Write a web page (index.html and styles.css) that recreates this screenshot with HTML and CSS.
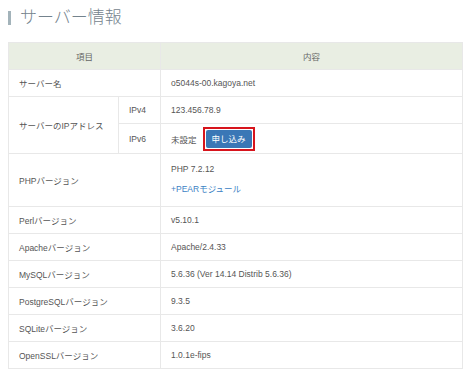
FILE: index.html
```html
<!DOCTYPE html>
<html lang="ja">
<head>
    <meta charset="UTF-8">
    <meta name="viewport" content="width=device-width, initial-scale=1.0">
    <title>サーバー情報</title>
    <link rel="stylesheet" href="styles.css">
</head>
<body>
    <h2 class="title">サーバー情報</h2>
    <table class="info">
        <colgroup>
            <col class="col-name">
            <col class="col-sub">
            <col class="col-value">
        </colgroup>
        <thead>
            <tr>
                <th colspan="2">項目</th>
                <th>内容</th>
            </tr>
        </thead>
        <tbody>
            <tr>
                <td colspan="2">サーバー名</td>
                <td>o5044s-00.kagoya.net</td>
            </tr>
            <tr class="ipv4">
                <td rowspan="2">サーバーのIPアドレス</td>
                <td>IPv4</td>
                <td>123.456.78.9</td>
            </tr>
            <tr class="ipv6">
                <td>IPv6</td>
                <td>
                    <div class="apply">
                        <span>未設定</span>
                        <span class="btn-frame"><a class="btn" href="#">申し込み</a></span>
                    </div>
                </td>
            </tr>
            <tr class="php">
                <td colspan="2">PHPバージョン</td>
                <td>
                    <p>PHP 7.2.12</p>
                    <p><a class="link" href="#">+PEARモジュール</a></p>
                </td>
            </tr>
            <tr>
                <td colspan="2">Perlバージョン</td>
                <td>v5.10.1</td>
            </tr>
            <tr>
                <td colspan="2">Apacheバージョン</td>
                <td>Apache/2.4.33</td>
            </tr>
            <tr>
                <td colspan="2">MySQLバージョン</td>
                <td>5.6.36 (Ver 14.14 Distrib 5.6.36)</td>
            </tr>
            <tr>
                <td colspan="2">PostgreSQLバージョン</td>
                <td>9.3.5</td>
            </tr>
            <tr>
                <td colspan="2">SQLiteバージョン</td>
                <td>3.6.20</td>
            </tr>
            <tr>
                <td colspan="2">OpenSSLバージョン</td>
                <td>1.0.1e-fips</td>
            </tr>
        </tbody>
    </table>
</body>
</html>
```

FILE: styles.css
```css
*{
    margin: 0;
    padding: 0;
    box-sizing: border-box;
}
body{
    margin: 8px;
    background: #ffffff;
    color: #555555;
    font-family: "Liberation Sans", "Noto Sans CJK JP", sans-serif;
    font-size: 8.5px;
}
.title{
    height: 20px;
    line-height: 20px;
    margin-bottom: 14px;
    color: #74838d;
    font-size: 17px;
    font-weight: 300;
    display: flex;
    align-items: center;
    gap: 9px;
}
.title::before{
    content: "";
    width: 3px;
    height: 14px;
    background: #a3b3ba;
}
.info{
    width: 455px;
    border-collapse: collapse;
    table-layout: fixed;
    border: 1px solid #e8e8e8;
}
.col-name{
    width: 110px;
}
.col-sub{
    width: 42px;
}
.info th,
.info td{
    border: 1px solid #e8e8e8;
    height: 27px;
    vertical-align: middle;
    font-weight: normal;
    text-align: left;
}
.info th{
    background: #e9eee3;
    text-align: center;
    color: #666666;
}
.info td{
    padding: 0 10px;
}
.info .ipv6 td{
    height: 30px;
}
.info .php td{
    height: 53px;
}
.php p{
    line-height: 20px;
}
.php p:first-child{
    margin-top: -3px;
}
.apply{
    display: flex;
    align-items: center;
    gap: 6px;
}
.btn-frame{
    display: inline-block;
    border: 2px solid #d7141c;
    padding: 1px;
}
.btn{
    display: block;
    padding: 0 6px;
    height: 18px;
    line-height: 18px;
    background: #3a77b6;
    border-radius: 2px;
    color: #ffffff;
    text-decoration: none;
}
.link{
    color: #3b82c4;
    text-decoration: none;
}
```
